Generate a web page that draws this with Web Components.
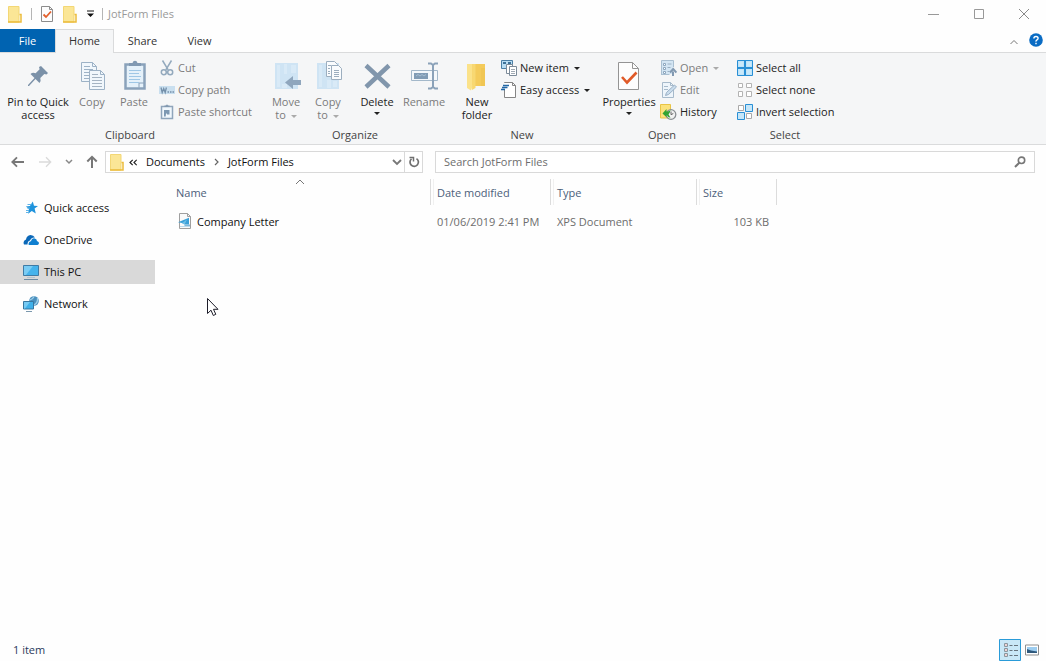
<!DOCTYPE html>
<html lang="en">
<head>
<meta charset="utf-8">
<title>JotForm Files</title>
<style>
  html, body { height: 100%; margin: 0; }
  body { background: #fff; font: 11px/13px "Open Sans", "Noto Sans", sans-serif; color: #222; }
</style>
</head>
<body>
<explorer-window></explorer-window>

<script>
const ICONS = {
  folder: [16, 18, '<path d="M1.5 1.5h10.5v15.5H1.5z" fill="#fbe696" stroke="#f3d775"/><path d="M12.500 9.500h1.500v7.500H1" fill="none" stroke="#ecbc3b" stroke-width="1.500"/>'],
  check: [14, 18, '<path d="M1.500 1.500h8l3 3v12h-11z" fill="#fdfdfd" stroke="#8c8c8c"/><path d="M9.500 1.500v3h3" fill="none" stroke="#8c8c8c"/><path d="M3.500 9.500l2.500 2.500 5-5.500" fill="none" stroke="#e2602c" stroke-width="1.800"/>'],
  qat: [8, 8, '<path d="M1 .5h7v1H1zM1 3.500h7L4.500 7z" fill="#111"/>'],
  min: [12, 12, '<path d="M0 6.500h11" stroke="#999"/>'],
  max: [12, 12, '<path d="M1.500 1.500h9v9h-9z" fill="none" stroke="#999"/>'],
  close: [12, 12, '<path d="M1 1l10 10M11 1L1 11" stroke="#8a8a8a" fill="none"/>'],
  up: [10, 6, '<path d="M1.500 5L5 1.500 8.500 5" fill="none" stroke="#777"/>'],
  help: [14, 14, '<circle cx="7" cy="7" r="6.800" fill="#0a6cc4"/><path d="M4.900 5.600Q4.900 3.500 7 3.500T9.100 5.300Q9.100 6.300 8 6.900T7 8.600M7 9.700v1.500" fill="none" stroke="#fff" stroke-width="1.400"/>'],
  pin: [32, 32, '<path d="M19 6l7 7-1.500 1.500-2.200-.6-4 4q1 3.100-.8 5.100l-4-4L7 26H6v-1l6.500-7-4-4q2-1.800 5.100-.8l4-4-.6-2.200z" fill="#7b91a8"/>'],
  copy: [32, 32, '<g fill="#f1f7fc" stroke="#9db2c6"><path d="M5.500 2.500h11l4 4v15h-15z"/><path d="M16.500 2.500v4h4M8 6.500h6M8 9.500h9M8 12.500h9M8 15.500h8M8 18.500h8" fill="none"/><path d="M13.500 10.500h11l4 4v15h-15z"/><path d="M24.500 10.500v4h4" fill="none"/><path d="M16 14.500h6M16 17.500h10M16 20.500h10M16 23.500h10M16 26.500h10" stroke="#a4b3c2"/></g>'],
  paste: [32, 32, '<path d="M7.500 4.500h19v24h-19z" fill="#e5f1fa" stroke="#8aa2bb" stroke-width="2.500"/><path d="M11 6V3h3.500Q15 .8 17 .8T19.500 3H23v3z" fill="#8199b2"/><path d="M11 10.500h12M11 13.500h10M11 16.500h12M11 19.500h11M11 22.500h10" stroke="#9fc7e6"/><path d="M21 27.500v-4.500h5" fill="none" stroke="#8aa2bb"/>'],
  cut: [16, 16, '<g fill="none" stroke="#93a9bd" stroke-width="1.500"><path d="M3.500.5l5.700 9.300M12.500.5L6.800 9.800"/><circle cx="4.800" cy="12.300" r="2.500"/><circle cx="11.200" cy="12.300" r="2.500"/></g>'],
  path: [16, 16, '<path d="M0 4h16v8H0z" fill="#c9dfef"/><path d="M2 5.500l1.200 5 1.500-4 1.500 4 1.200-5M8.500 10h1.500M11 10h1.500M13.500 10H15" fill="none" stroke="#7590aa" stroke-width="1.300"/>'],
  shortcut: [16, 16, '<path d="M2.500 2.500h11v12h-11z" fill="#f0f7fc" stroke="#8fa5bb" stroke-width="1.500"/><path d="M5.500 3V1.500h1.500Q8-.5 9 1.500h1.500V3z" fill="#8299b0"/><path d="M5 12.500V6h5.500v4.500H8V9q-1.500.5-1.300 3.500z" fill="#7d98b2"/>'],
  move: [32, 32, '<path d="M5 3h23v26H5z" fill="#cfe4f4"/><path d="M7 5h3v22H7zM14 4h3v10h-3zM21 5h5v8h-5zM12 24h5v4h-5z" fill="#d9eaf7"/><path d="M15 22.500l8-6.500v4h8v5h-8v4z" fill="#8fa6bd"/>'],
  copyto: [32, 32, '<path d="M5 3h22v26H5z" fill="#cfe4f4"/><path d="M7 5h3v22H7zM15 20h4v8h-4zM21 21h4v6h-4z" fill="#d9eaf7"/><g fill="#fafcfe" stroke="#9caebf"><path d="M14.500 1.500h8l3 3v12h-11z"/><path d="M19.500 5.500h7l3 3v11h-10z"/><path d="M22 10.500h5M22 12.500h5M22 14.500h5M22 16.500h5M16 5.500h3M16 8.500h2M16 11.500h2M16 13.500h2"/></g>'],
  del: [32, 32, '<path d="M5 5.500L28 27M28 5.500L5 27" stroke="#8196ac" stroke-width="4.500" fill="none"/>'],
  rename: [32, 32, '<path d="M3.500 10.500h26v10h-26z" fill="#f4f8fb" stroke="#a3b8ca"/><path d="M6 13h14v6H6z" fill="#819cb5"/><path d="M8 16l2-1.500 2 1.500 2-1.500 2 1.500 2-1.500" stroke="#a8bfd2" fill="none"/><path d="M20 3.500h3l2 1.500 2-1.500h3M20 28.500h3l2-1.500 2 1.500h3M25 5v22" fill="none" stroke="#8ba2b9" stroke-width="2"/>'],
  newfolder: [32, 32, '<path d="M9 4h15v22H14L9 24z" fill="#f4cb5b"/><path d="M6 4h5.500v22.500l-1.500 4L6 28z" fill="#fbe28a"/><path d="M11.500 4h3v24l-3.500 2z" fill="#f8d872"/><path d="M20 8h4v18h-4z" fill="#f0c654"/>'],
  newitem: [16, 16, '<path d="M.5.5h11v8H.5z" fill="#b8ddf3" stroke="#4b7fa6"/><path d="M2 2h3v2H2zM7 2h3v2H7z" fill="#3e7299"/><path d="M5.500 4.500h6v9h-6z" fill="#fff" stroke="#7c8b99"/><path d="M8.500 6.500h7v9h-7z" fill="#fff" stroke="#7c8b99"/><path d="M10 9.500h4M10 11.500h4M10 13.500h4" stroke="#a0aab4"/>'],
  easy: [16, 16, '<path d="M3.500 1V.5h8l3 3v12h-11V8" fill="#fff" stroke="#858585"/><path d="M11.500.5v3h3" fill="none" stroke="#858585"/><path d="M2 3.500h6M1 5.500h5.500M0 7.500h4" stroke="#2267a5" stroke-width="1.300"/>'],
  props: [32, 32, '<path d="M5.500 2.500h14l6 6v21h-20z" fill="#fdfdfd" stroke="#949494"/><path d="M19.500 2.500v6h6" fill="none" stroke="#949494"/><path d="M9 17l5 5.500 9.500-10" fill="none" stroke="#e05a28" stroke-width="2.600"/>'],
  open: [16, 16, '<path d="M1 1h11v13H1z" fill="#d3e5f3"/><path d="M2.500 3.500h2v2h-2zM2.500 7.500h2v2h-2zM2.500 11.500h2v2h-2z" fill="#fff" stroke="#8ea7be"/><path d="M6.500 4h4M6.500 7.500h3M6.500 11.500h2" stroke="#9ab0c4"/><path d="M.5 15V.5h12V7M.5 14.500h8" fill="none" stroke="#a9bfd1"/><path d="M12 16v-4.500M9 12.500L12.200 9l3.200 3.500" fill="none" stroke="#8299b1" stroke-width="2"/>'],
  edit: [16, 16, '<path d="M1.500.5h8l3 3v12h-11z" fill="#eef5fb" stroke="#a7bacb"/><path d="M9.500.5v3h3M3 4.500h4M3 7.500h4" fill="none" stroke="#a7bacb"/><path d="M4.500 13.500l1-3 8-7.500 2 2-8 7.500z" fill="#c9dcec" stroke="#9bb1c6"/>'],
  history: [18, 16, '<path d="M.5.500h10v13.500H.5z" fill="#fbe27c" stroke="#e9c445"/><circle cx="11" cy="10.500" r="4.800" fill="#f2f2f2" stroke="#8a8f92" stroke-width="1.300"/><path d="M11 7.500v3.200l2.300-1.200" fill="none" stroke="#666"/><path d="M2.500 9.500l4-4.500v2.500q2.500 0 4-1.500-.5 3-2 4.200l2 3.500q-2.500 0-4-3v2.500z" fill="#32a432"/>'],
  all: [16, 16, '<path d="M.5.500h15v15H.5z" fill="#bfe3f8" stroke="#288fd5"/><path d="M8 0v16M0 8h16" stroke="#288fd5" stroke-width="2"/><path d="M2 2h4v4H2zM10 2h4v4h-4zM2 10h4v4H2zM10 10h4v4h-4z" fill="#c9e9fa"/>'],
  none: [16, 16, '<path d="M1.500 1.500h4v4h-4zM9.500 1.500h5v4h-5zM1.500 9.500h4v5h-4zM9.500 9.500h5v5h-5z" fill="#fff" stroke="#b3b3b3"/>'],
  invert: [16, 16, '<path d="M1.500 1.500h5v5h-5zM9.500 9.500h5v5h-5z" fill="#fff" stroke="#a9a9a9"/><path d="M8.500.5h7v7h-7zM.5 8.500h7v7h-7z" fill="#c5e6f9" stroke="#288fd5"/>'],
  back: [14, 12, '<path d="M13 6H1.500M6 1.300L1.300 6 6 10.700" fill="none" stroke="#777" stroke-width="1.800"/>'],
  forward: [14, 12, '<path d="M1 6h11.500M8 1.300L12.700 6 8 10.700" fill="none" stroke="#dadada" stroke-width="1.300"/>'],
  recent: [8, 6, '<path d="M1 1l3 3 3-3" fill="none" stroke="#888" stroke-width="1.500"/>'],
  upward: [12, 14, '<path d="M6 13V2M1.300 6.500L6 1.800l4.700 4.700" fill="none" stroke="#777" stroke-width="2"/>'],
  laquo: [8, 7, '<path d="M3.700.8L1 3.500l2.700 2.700M7.700.8L5 3.500l2.700 2.700" fill="none" stroke="#222" stroke-width="1.200"/>'],
  chevron: [5, 8, '<path d="M1 1l3 3-3 3" fill="none" stroke="#666" stroke-width="1.200"/>'],
  drop: [10, 7, '<path d="M1 1l4 4 4-4" fill="none" stroke="#777" stroke-width="1.800"/>'],
  refresh: [12, 12, '<path d="M8.500 2.600A4.200 4.200 0 1 1 3.500 2.900" fill="none" stroke="#6f6f6f" stroke-width="1.700"/><path d="M1.500 1.500h4v4" fill="none" stroke="#6f6f6f" stroke-width="1.500"/>'],
  search: [12, 12, '<circle cx="7.500" cy="4.300" r="3.200" fill="none" stroke="#777" stroke-width="1.600"/><path d="M5.300 6.700L1 11" stroke="#777" stroke-width="2"/>'],
  star: [16, 16, '<path d="M9.800 1.500l1.200 4.200 4 .3-3.400 2.600 1.200 5-4-2.500-3.700 2.700.8-4.700-3-2.600 4-.5z" fill="#1f93dc"/><path d="M4.500 4.500h4M4 8h3M3 10.500h3M3 12.500h3" stroke="#5fb4e8"/>'],
  onedrive: [16, 16, '<path d="M1 12.500Q-.5 9 3 7.500q.5-4 4.500-4.500 3 0 4.500 2.500-3.500-.5-5 3-2.500.5-2.500 4z" fill="#0b68b8"/><path d="M5.500 12.500q0-3 2.500-3.200.8-3.300 3.700-2.900 2 .4 2.300 2.700 2 .8 2 2 0 1.400-1.500 1.900H7q-1.300 0-1.500-.5z" fill="#0f7fd0"/>'],
  pc: [16, 16, '<path d="M.5 1.500h15v10H.5z" fill="#45b3ec" stroke="#3f7ba5"/><path d="M1 2h9L3 11H1z" fill="#7accf4"/><path d="M1 15.500h14" stroke="#6d8ba3"/><path d="M4 13.500h8" stroke="#b2c3cf"/>'],
  network: [16, 16, '<circle cx="11" cy="5" r="4.800" fill="#4a8fbd"/><path d="M7 4q3-1 4-3.500M11 9q4-2 3.500-7" stroke="#9dcfea" fill="none" stroke-width="1.300"/><path d="M.5 5.500h10v7.500H.5z" fill="#3fb0e9" stroke="#37769f"/><path d="M1 6h6l-5 6.500H1z" fill="#76caf3"/><path d="M3 15.500h6" stroke="#7b98ad"/>'],
  xps: [16, 16, '<path d="M2.500.5h8l3 3v12h-11z" fill="#fafafa" stroke="#9f9f9f"/><path d="M10.500.5v3h3" fill="none" stroke="#9f9f9f"/><path d="M1 9.200l11-4.500v6.800H7.500L5 10z" fill="#3aa0d8"/><path d="M3 13h4l1.500-1.500H13v2H3z" fill="#7fb9dc"/><path d="M5 10l5-3.500-2.500 5z" fill="#6fbfe8"/>'],
  details: [22, 22, '<path d="M.5.500h21v21H.5z" fill="#c9e8f7" stroke="#2a9bd8"/><g fill="#fff" stroke="#8a969e"><path d="M5.500 4.500h3v3h-3zM5.500 9.500h3v3h-3zM5.500 14.500h3v3h-3z"/></g><path d="M10.500 6.500h3M15 6.500h4M10.500 11.500h3M15 11.500h4M10.500 16.500h3M15 16.500h4" stroke="#67747d"/><path d="M6.500 5.500h1v1h-1zM6.500 10.500h1v1h-1zM6.500 15.500h1v1h-1z" fill="#b55"/>'],
  thumb: [14, 12, '<path d="M.5 1h13v10H.5z" fill="#fff" stroke="#8f8f8f"/><path d="M2 3h10v6H2z" fill="#9dcdf0"/><path d="M2 5l4 1.500 6 1V9H2z" fill="#2e587c"/>'],
  sort: [10, 6, '<path d="M1 5l4-4 4 4" fill="none" stroke="#777"/>'],
  tri: [6, 3, '<path d="M0 0h6L3 3z" fill="currentColor"/>'],
  cursor: [14, 20, '<path d="M1.500 1.500v15l3.500-3.300 2.300 5.300 2.500-1.200-2.300-5h4.500z" fill="#fff" stroke="#1e1e2a"/>']
};

function define(name, markup, setup) {
  const template = document.createElement('template');
  template.innerHTML = markup;
  customElements.define(name, class extends HTMLElement {
    constructor() {
      super();
      this.attachShadow({ mode: 'open' }).append(template.content.cloneNode(true));
    }
    connectedCallback() { if (setup) setup(this, this.shadowRoot); }
  });
}

const RESET = `button { font: inherit; color: inherit; background: none; border: 0; margin: 0; padding: 0; }
  button:focus-visible, a:focus-visible { outline: 1px solid #2a9bd8; outline-offset: -1px; }`;

define('app-icon', `<style>:host { display: inline-flex; flex: none; } svg { display: block; }</style>`, (el, root) => {
  const [w, h, body] = ICONS[el.getAttribute('name')];
  root.innerHTML += `<svg width="${w}" height="${h}" viewBox="0 0 ${w} ${h}" aria-hidden="true">${body}</svg>`;
});

define('title-bar', `<style>${RESET}
  :host { display: flex; align-items: center; height: 27px; padding: 0 0 2px 7px; color: #999; }
  .tools { display: flex; align-items: center; gap: 8px; }
  .sep { width: 1px; height: 12px; background: #b5b5b5; }
  h1 { flex: 1; margin: 0 0 0 5px; font: inherit; }
  button { display: grid; place-items: center; }
  .win { width: 45px; height: 27px; }
</style>
<div class="tools">
  <button aria-label="Window menu"><app-icon name="folder"></app-icon></button>
  <span class="sep"></span>
  <button aria-label="Properties"><app-icon name="check"></app-icon></button>
  <button aria-label="New folder"><app-icon name="folder"></app-icon></button>
  <button aria-label="Customize toolbar"><app-icon name="qat"></app-icon></button>
  <span class="sep"></span>
</div>
<h1><slot></slot></h1>
<button class="win" aria-label="Minimize"><app-icon name="min"></app-icon></button>
<button class="win" aria-label="Maximize"><app-icon name="max"></app-icon></button>
<button class="win" aria-label="Close"><app-icon name="close"></app-icon></button>`);

define('ribbon-tabs', `<style>${RESET}
  :host { display: flex; height: 24px; box-sizing: border-box; border-bottom: 1px solid #dadbdc; }
  [role=tablist] { display: flex; flex: 1; }
  [role=tab] { width: 57px; height: 23px; color: #333; }
  .file { width: 55px; background: #0063b1; color: #fff; }
  [aria-selected=true] { width: 59px; height: 24px; padding-bottom: 2px; background: #f5f6f7; border: 1px solid #dadbdc; border-bottom: 0; }
  .end { display: flex; align-items: center; gap: 10px; padding: 0 3px; }
</style>
<div role="tablist">
  <button role="tab" class="file">File</button><button role="tab" aria-selected="true">Home</button><button role="tab">Share</button><button role="tab">View</button>
</div>
<div class="end">
  <button aria-label="Minimize the ribbon"><app-icon name="up"></app-icon></button>
  <button aria-label="Help"><app-icon name="help"></app-icon></button>
</div>`);

define('ribbon-group', `<style>
  :host { display: flex; flex: none; flex-direction: column; }
  .row { display: flex; height: 70px; }
  .name { text-align: center; line-height: 16px; color: #444; }
</style>
<div class="row"><slot></slot></div><div class="name"></div>`, (el, root) => {
  root.querySelector('.name').textContent = el.getAttribute('label');
});

define('ribbon-stack', `<style>:host { display: flex; flex-direction: column; width: var(--stack-width, 98px); }</style><slot></slot>`);

define('large-button', `<style>${RESET}
  :host { display: block; width: var(--button-width, 42px); }
  :host([disabled]) button { color: #7b7b7b; }
  :host([disabled]) .arrow { color: #aaa; }
  button { display: flex; flex-direction: column; align-items: center; width: 100%; height: 66px; padding-top: 3px; white-space: nowrap; }
  .icon { display: flex; }
  .text { margin-top: 3px; white-space: pre-line; }
  .arrow { display: inline-flex; vertical-align: middle; margin-left: 2px; }
  .below { margin: 4px 0 0; }
</style>
<button><span class="icon"></span><span class="text"></span></button>`, (el, root) => {
  const text = root.querySelector('.text');
  const menu = el.getAttribute('menu');
  root.querySelector('.icon').innerHTML = `<app-icon name="${el.getAttribute('icon')}"></app-icon>`;
  text.textContent = el.getAttribute('label').replace('|', '\n');
  if (menu === 'inline') text.insertAdjacentHTML('beforeend', ' <span class="arrow"><app-icon name="tri"></app-icon></span>');
  if (menu === 'below') text.insertAdjacentHTML('afterend', '<span class="arrow below"><app-icon name="tri"></app-icon></span>');
  root.querySelector('button').disabled = el.hasAttribute('disabled');
});

define('small-button', `<style>${RESET}
  :host { display: block; height: 22px; }
  :host([disabled]) button { color: #7b7b7b; }
  :host([disabled]) .arrow { color: #aaa; }
  button { display: flex; align-items: center; gap: 3px; height: 22px; padding: 0 2px; white-space: nowrap; }
  .icon { display: flex; justify-content: center; width: 16px; }
  .text { padding-bottom: 2px; }
  .arrow { display: inline-flex; margin-left: 2px; }
</style>
<button><span class="icon"></span><span class="text"><slot></slot></span></button>`, (el, root) => {
  const button = root.querySelector('button');
  root.querySelector('.icon').innerHTML = `<app-icon name="${el.getAttribute('icon')}"></app-icon>`;
  if (el.hasAttribute('menu')) button.insertAdjacentHTML('beforeend', '<span class="arrow"><app-icon name="tri"></app-icon></span>');
  button.disabled = el.hasAttribute('disabled');
});

define('home-ribbon', `<style>
  :host { display: flex; gap: 10px; box-sizing: border-box; height: 92px; padding: 4px 5px 0; background: #f5f6f7; border-bottom: 1px solid #dadbdc; overflow: hidden; }
  .wide { --button-width: 66px; }
  .props { --button-width: 60px; }
  .mid { --button-width: 52px; }
  .tight { --button-width: 44px; }
  .new { --stack-width: 90px; }
  .open { --stack-width: 66px; }
  .select { --stack-width: 100px; }
  .gap { width: 2px; }
</style>
<ribbon-group label="Clipboard">
  <large-button class="wide" icon="pin" label="Pin to Quick|access"></large-button>
  <large-button icon="copy" label="Copy" disabled></large-button>
  <large-button icon="paste" label="Paste" disabled></large-button>
  <span class="gap"></span>
  <ribbon-stack>
    <small-button icon="cut" disabled>Cut</small-button>
    <small-button icon="path" disabled>Copy path</small-button>
    <small-button icon="shortcut" disabled>Paste shortcut</small-button>
  </ribbon-stack>
</ribbon-group>
<ribbon-group label="Organize">
  <large-button icon="move" label="Move|to" menu="inline" disabled></large-button>
  <large-button icon="copyto" label="Copy|to" menu="inline" disabled></large-button>
  <span class="gap"></span>
  <large-button class="mid" icon="del" label="Delete" menu="below"></large-button>
  <large-button icon="rename" label="Rename" disabled></large-button>
</ribbon-group>
<ribbon-group label="New">
  <large-button class="tight" icon="newfolder" label="New|folder"></large-button>
  <ribbon-stack class="new">
    <small-button icon="newitem" menu>New item</small-button>
    <small-button icon="easy" menu>Easy access</small-button>
  </ribbon-stack>
</ribbon-group>
<ribbon-group label="Open">
  <large-button class="props" icon="props" label="Properties" menu="below"></large-button>
  <ribbon-stack class="open">
    <small-button icon="open" menu disabled>Open</small-button>
    <small-button icon="edit" disabled>Edit</small-button>
    <small-button icon="history">History</small-button>
  </ribbon-stack>
</ribbon-group>
<ribbon-group label="Select">
  <ribbon-stack class="select">
    <small-button icon="all">Select all</small-button>
    <small-button icon="none">Select none</small-button>
    <small-button icon="invert">Invert selection</small-button>
  </ribbon-stack>
</ribbon-group>`);

define('address-row', `<style>${RESET}
  :host { display: grid; grid-template-columns: 93px minmax(0, 53fr) minmax(0, 100fr); column-gap: 12px; padding: 6px 11px 6px 0; }
  .nav { display: flex; align-items: center; justify-content: space-between; padding-left: 11px; margin-right: -5px; }
  button { display: flex; align-items: center; }
  .box { display: flex; align-items: center; box-sizing: border-box; height: 22px; border: 1px solid #d9d9d9; background: #fff; }
  .path { display: flex; flex: 1; align-items: center; gap: 4px; padding-left: 3px; color: #111; }
  a { padding: 0 5px 2px; color: inherit; text-decoration: none; }
  .drop { padding-right: 2px; }
  .refresh { align-self: stretch; justify-content: center; width: 18px; border-left: 1px solid #d9d9d9; }
  input { flex: 1; min-width: 0; border: 0; outline: 0; padding: 0 8px 2px; font: inherit; background: none; }
  input::placeholder { color: #6d6d6d; opacity: 1; }
  .find { padding-right: 8px; }
</style>
<nav class="nav" aria-label="History">
  <button aria-label="Back"><app-icon name="back"></app-icon></button>
  <button aria-label="Forward" disabled><app-icon name="forward"></app-icon></button>
  <button aria-label="Recent locations"><app-icon name="recent"></app-icon></button>
  <button aria-label="Up"><app-icon name="upward"></app-icon></button>
</nav>
<div class="box">
  <div class="path"><app-icon name="folder"></app-icon><app-icon name="laquo"></app-icon><a href="#documents">Documents</a><app-icon name="chevron"></app-icon><a href="#jotform">JotForm Files</a></div>
  <button class="drop" aria-label="Previous locations"><app-icon name="drop"></app-icon></button>
  <button class="refresh" aria-label="Refresh"><app-icon name="refresh"></app-icon></button>
</div>
<div class="box">
  <input type="search" aria-label="Search JotForm Files" placeholder="Search JotForm Files">
  <button class="find" aria-label="Search"><app-icon name="search"></app-icon></button>
</div>`);

define('place-link', `<style>${RESET}
  :host { display: block; }
  a { display: flex; align-items: center; gap: 5px; height: 24px; padding-left: 23px; color: #111; text-decoration: none; }
  :host([current]) a { background: #d9d9d9; }
  .text { padding-bottom: 2px; }
</style>
<a href="#"><span class="icon"></span><span class="text"><slot></slot></span></a>`, (el, root) => {
  root.querySelector('.icon').outerHTML = `<app-icon name="${el.getAttribute('icon')}"></app-icon>`;
});

define('place-list', `<style>
  :host { display: flex; flex: none; flex-direction: column; gap: 8px; width: 155px; padding-top: 17px; }
</style><slot></slot>`);

define('file-table', `<style>
  :host { display: block; flex: 1; min-width: 0; padding-left: 15px; }
  table { table-layout: fixed; width: 607px; border-collapse: separate; border-spacing: 0; }
  th, td { box-sizing: border-box; padding: 0 0 0 6px; text-align: left; font-weight: 400; white-space: nowrap; }
  th { position: relative; height: 26px; color: #4c607a; }
  th + th { border-left: 1px solid #dcdcdc; background: linear-gradient(#f0f0f0, #f0f0f0) 2px 0 / 1px 100% no-repeat; }
  th:last-child { border-right: 1px solid #dcdcdc; }
  .sort { position: absolute; top: 0; left: 50%; transform: translateX(-50%); display: flex; }
  td { height: 32px; padding-left: 7px; color: #6d6d6d; }
  .file { color: #111; }
  .file span { display: flex; align-items: center; gap: 4px; }
  .name { width: 260px; } .date { width: 120px; } .type { width: 146px; } .size { width: 81px; }
  td.num { text-align: right; padding-right: 8px; }
</style>
<table>
  <thead><tr>
    <th class="name" scope="col" aria-sort="ascending">Name<span class="sort"><app-icon name="sort"></app-icon></span></th>
    <th class="date" scope="col">Date modified</th><th class="type" scope="col">Type</th><th class="size" scope="col">Size</th>
  </tr></thead>
  <tbody><tr>
    <td class="file"><span><app-icon name="xps"></app-icon>Company Letter</span></td>
    <td>01/06/2019 2:41 PM</td><td>XPS Document</td><td class="num">103 KB</td>
  </tr></tbody>
</table>`);

define('status-bar', `<style>${RESET}
  :host { display: flex; align-items: center; height: 23px; padding: 0 7px 0 13px; color: #2b3a5c; }
  .count { flex: 1; }
  .views { display: flex; align-items: center; gap: 4px; }
  button { display: flex; }
</style>
<span class="count"><slot></slot></span>
<div class="views">
  <button aria-label="Details view" aria-pressed="true"><app-icon name="details"></app-icon></button>
  <button aria-label="Large thumbnails"><app-icon name="thumb"></app-icon></button>
</div>`);

define('explorer-window', `<style>
  :host { position: relative; display: flex; flex-direction: column; min-height: 100%; background: #fefefe; }
  main { display: flex; flex: 1; }
  .pointer { position: absolute; left: 206px; top: 297px; pointer-events: none; }
</style>
<title-bar>JotForm Files</title-bar>
<ribbon-tabs></ribbon-tabs>
<home-ribbon></home-ribbon>
<address-row></address-row>
<main>
  <place-list>
    <place-link icon="star">Quick access</place-link>
    <place-link icon="onedrive">OneDrive</place-link>
    <place-link icon="pc" current>This PC</place-link>
    <place-link icon="network">Network</place-link>
  </place-list>
  <file-table></file-table>
</main>
<status-bar>1 item</status-bar>
<app-icon class="pointer" name="cursor"></app-icon>`);
</script>
</body>
</html>
